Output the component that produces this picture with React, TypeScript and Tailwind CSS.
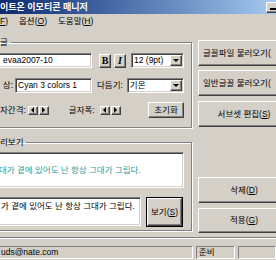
import type { ReactNode } from 'react'

const raised =
  'bg-[#d4d0c8] border border-t-white border-l-white border-r-[#404040] border-b-[#404040] shadow-[inset_-1px_-1px_0_#808080]'
const sunken =
  'bg-white border border-t-[#808080] border-l-[#808080] border-r-white border-b-white shadow-[inset_1px_1px_0_#404040,inset_-1px_-1px_0_#d4d0c8]'
const group =
  'border border-[#808080] shadow-[inset_1px_1px_0_#ffffff,1px_1px_0_#ffffff]'

function DropArrow() {
  return (
    <div className={`${raised} w-[12px] h-full flex items-center justify-center shrink-0`}>
      <div className="w-0 h-0 border-l-[3px] border-r-[3px] border-t-[3px] border-l-transparent border-r-transparent border-t-black" />
    </div>
  )
}

function Select({ value }: { value: string }) {
  return (
    <div className={`${sunken} flex-1 h-[15px] flex items-stretch p-[1px] pl-[2px]`}>
      <span className="flex-1 flex items-center leading-none whitespace-nowrap overflow-hidden">{value}</span>
      <DropArrow />
    </div>
  )
}

function Spin() {
  return (
    <div className="flex gap-[1px]">
      <div className={`${raised} w-[10px] h-[9px] flex items-center justify-center`}>
        <div className="w-0 h-0 border-t-[3px] border-b-[3px] border-r-[3px] border-t-transparent border-b-transparent border-r-black" />
      </div>
      <div className={`${raised} w-[10px] h-[9px] flex items-center justify-center`}>
        <div className="w-0 h-0 border-t-[3px] border-b-[3px] border-l-[3px] border-t-transparent border-b-transparent border-l-black" />
      </div>
    </div>
  )
}

function SideButton({ children, left = false, className = '' }: { children: ReactNode; left?: boolean; className?: string }) {
  return (
    <div
      className={`${raised} w-[92px] flex items-center whitespace-nowrap overflow-hidden leading-none ${
        left ? 'justify-start pl-[4px]' : 'justify-center'
      } ${className}`}
    >
      {children}
    </div>
  )
}

export default function App() {
  return (
    <div className="w-[276px] h-[260px] overflow-hidden bg-[#d4d0c8] flex flex-col text-[8.5px] text-black font-['Liberation_Sans','Noto_Sans_CJK_KR',sans-serif]">
      {/* Title bar */}
      <div className="h-[14px] shrink-0 flex items-center bg-linear-to-r from-[#0e2a72] to-[#a6caf0]">
        <span className="flex-1 text-white font-bold text-[9px] leading-none whitespace-nowrap">이트온 이모티콘 매니저</span>
        <div className={`${raised} w-[14px] h-[11px] -mr-[4px] shrink-0 flex items-end pl-[3px] pb-[2px]`}>
          <div className="w-[6px] h-[2px] bg-black" />
        </div>
      </div>

      {/* Menu */}
      <div className="h-[14px] shrink-0 flex items-center gap-[11px] leading-none whitespace-nowrap">
        <span>
          <u>F</u>)
        </span>
        <span>
          옵션(<u>O</u>)
        </span>
        <span>
          도움말(<u>H</u>)
        </span>
      </div>

      {/* Main */}
      <div className="flex gap-[6px] -ml-[8px] shrink-0">
        {/* Left column */}
        <div className="w-[200px] shrink-0 flex flex-col">
          <fieldset className={`${group} mt-[9px] pt-[6px] pl-[5px] pr-[7px] pb-[9px]`}>
            <legend className="ml-[2px] pr-[3px] leading-[10px]">글</legend>

            <div className="flex items-center h-[15px]">
              <div className={`${sunken} w-[94px] h-[15px] flex items-center pl-[4px] leading-none`}>evaa2007-10</div>
              <div className={`${raised} ml-[7px] w-[12px] h-[14px] flex items-center justify-center font-['Liberation_Serif',serif] font-bold text-[10px] leading-none`}>
                B
              </div>
              <div className={`${raised} ml-[3px] w-[12px] h-[14px] flex items-center justify-center font-['Liberation_Serif',serif] font-bold italic text-[10px] leading-none`}>
                I
              </div>
              <div className="ml-[5px] flex-1 flex">
                <Select value="12 (9pt)" />
              </div>
            </div>

            <div className="flex items-center h-[15px] mt-[10px]">
              <span className="w-[15px] text-right leading-none whitespace-nowrap">상:</span>
              <div className={`${sunken} ml-[2px] w-[77px] h-[15px] flex items-center pl-[2px] leading-none whitespace-nowrap`}>
                Cyan 3 colors 1
              </div>
              <span className="ml-[5px] leading-none whitespace-nowrap">다듬기:</span>
              <div className="ml-[4px] flex-1 flex">
                <Select value="기몬" />
              </div>
            </div>

            <div className="flex items-center h-[16px] mt-[9px] whitespace-nowrap">
              <span className="pl-[2px] leading-none">자간격:</span>
              <div className="ml-[2px]">
                <Spin />
              </div>
              <span className="ml-[20px] leading-none">글자폭:</span>
              <div className="ml-[5px]">
                <Spin />
              </div>
              <div className="flex-1" />
              <div className={`${raised} w-[36px] h-[16px] flex items-center justify-center leading-none`}>초기화</div>
            </div>
          </fieldset>

          <fieldset className={`${group} mt-[9px] pt-[5px] pl-[5px] pr-[7px] pb-[3px]`}>
            <legend className="ml-[2px] pr-[3px] leading-[10px]">리보기</legend>

            <div className={`${sunken} h-[36px] flex items-center leading-none whitespace-nowrap overflow-hidden text-[#2e9c9a]`}>
              대가 곁에 있어도 난 항상 그대가 그립다.
            </div>

            <div className="flex items-start h-[30px] mt-[9px]">
              <div className={`${sunken} w-[143px] h-[29px] pl-[2px] pt-[4px] leading-none whitespace-nowrap overflow-hidden`}>
                가 곁에 있어도 난 항상 그대가 그립다.
              </div>
              <div className="ml-[5px] w-[37px] h-[30px] border border-black">
                <div className={`${raised} w-full h-full flex items-center justify-center leading-none whitespace-nowrap`}>
                  보기(<u>S</u>)
                </div>
              </div>
            </div>
          </fieldset>
        </div>

        {/* Right column */}
        <div className="w-[92px] shrink-0 flex flex-col pt-[12px]">
          <SideButton left className="h-[26px]">글꼴파일 불러오기(</SideButton>
          <SideButton left className="h-[26px] mt-[4px]">일반글꼴 불러오기(</SideButton>
          <SideButton className="h-[26px] mt-[5px]">
            서브셋 편집(<u>S</u>)
          </SideButton>
          <SideButton className="h-[26px] mt-[50px]">
            삭제(<u>D</u>)
          </SideButton>
          <SideButton className="h-[25px] mt-[5px]">
            적용(<u>G</u>)
          </SideButton>
        </div>
      </div>

      {/* Status bar */}
      <div className="mt-[4px] border-t border-[#808080] shadow-[inset_0_1px_0_#ffffff] pt-[8px] flex gap-[3px] -ml-[10px]">
        <div className="w-[203px] h-[13px] border border-t-[#808080] border-l-[#808080] border-r-white border-b-white flex items-center pl-[10px] leading-none whitespace-nowrap">
          uds@nate.com
        </div>
        <div className="w-[39px] h-[13px] border border-t-[#808080] border-l-[#808080] border-r-white border-b-white flex items-center pl-[2px] leading-none whitespace-nowrap">
          준비
        </div>
        <div className="flex-1 h-[13px] border border-t-[#808080] border-l-[#808080] border-r-white border-b-white" />
      </div>
    </div>
  )
}
